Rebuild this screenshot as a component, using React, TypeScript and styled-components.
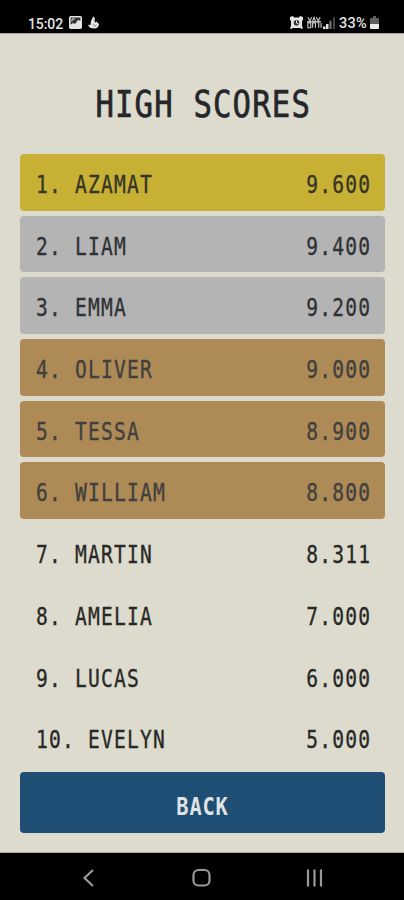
import React from "react";
import styled, { createGlobalStyle } from "styled-components";

const GlobalStyle = createGlobalStyle`
  * { box-sizing: border-box; }
  body { margin: 0; background: #000; }
`;

const mono = `"DejaVu Sans Mono", "Liberation Mono", monospace`;

const Phone = styled.div`
  width: 404px;
  height: 900px;
  display: flex;
  flex-direction: column;
  overflow: hidden;
  background: #000;
`;

const StatusBar = styled.header`
  height: 33px;
  flex: none;
  display: flex;
  justify-content: space-between;
  padding: 16px 25px 0 28px;
  color: #e4e4e4;
  font: 500 14px/16px Roboto, sans-serif;
`;

const StatusGroup = styled.div`
  display: flex;
  align-items: flex-start;
`;

const Clock = styled.span`
  width: 41px;
  letter-spacing: -0.1px;
`;

const Percent = styled.span`
  width: 31px;
  font-size: 14.5px;
  letter-spacing: 0.2px;
`;

const StatusIcon = styled.svg<{ $gap?: number }>`
  display: block;
  flex: none;
  margin-right: ${(p) => p.$gap ?? 0}px;
`;

const Screen = styled.main`
  height: 820px;
  flex: none;
  display: flex;
  flex-direction: column;
  padding: 0 19px 0 20px;
  background: #dddbce;
  border-top: 1px solid #aaa89e;
  border-bottom: 1px solid #aaa89e;
`;

const Title = styled.h1`
  height: 120px;
  margin: 0;
  padding-top: 49px;
  display: flex;
  justify-content: center;
  color: #25262a;
  font: 400 37px/44px ${mono};
  letter-spacing: 1.4px;
  -webkit-text-stroke: 0.7px;
  white-space: nowrap;
`;

const TitleText = styled.span`
  flex: none;
  transform: translateX(1px) scaleX(0.828);
`;

const Scores = styled.ol`
  list-style: none;
  margin: 0;
  padding: 0;
  height: 618px;
  flex: none;
  display: grid;
  grid-template-rows: repeat(10, 56.5px);
  row-gap: 5.2px;
`;

const tiers = {
  gold: { bg: "#c7b033", ink: "#343526" },
  silver: { bg: "#b4b4b4", ink: "#303134" },
  bronze: { bg: "#ae8a57", ink: "#40403d" },
  none: { bg: "transparent", ink: "#282927" },
};
type Tier = keyof typeof tiers;

const Row = styled.li<{ $tier: Tier }>`
  display: flex;
  justify-content: space-between;
  padding: 6px 14px 0 16px;
  border-radius: 4px;
  background: ${(p) => tiers[p.$tier].bg};
  color: ${(p) => tiers[p.$tier].ink};
  font: 400 24.5px/49px ${mono};
  letter-spacing: 1.5px;
  -webkit-text-stroke: 0.35px;
  white-space: pre;
`;

const Narrow = styled.span<{ $origin: string }>`
  transform: scaleX(0.8);
  transform-origin: ${(p) => p.$origin} center;
`;

const BackButton = styled.button`
  height: 61px;
  flex: none;
  border: 0;
  border-radius: 4px;
  padding: 9px 0 0;
  background: #1e4e73;
  color: #dfe3e4;
  font: 700 24.5px/50px ${mono};
  letter-spacing: 1px;
`;

const ButtonText = styled.span`
  display: inline-block;
  transform: scaleX(0.83);
`;

const NavBar = styled.nav`
  height: 47px;
  flex: none;
  display: grid;
  grid-template-columns: repeat(3, 113px);
  justify-content: center;
  align-items: center;
  justify-items: center;
  padding-top: 2px;
`;

const players: [string, string, Tier][] = [
  ["AZAMAT", "9.600", "gold"],
  ["LIAM", "9.400", "silver"],
  ["EMMA", "9.200", "silver"],
  ["OLIVER", "9.000", "bronze"],
  ["TESSA", "8.900", "bronze"],
  ["WILLIAM", "8.800", "bronze"],
  ["MARTIN", "8.311", "none"],
  ["AMELIA", "7.000", "none"],
  ["LUCAS", "6.000", "none"],
  ["EVELYN", "5.000", "none"],
];

export default function App() {
  return (
    <Phone>
      <GlobalStyle />
      <StatusBar>
        <StatusGroup>
          <Clock>15:02</Clock>
          <StatusIcon width="13" height="13" viewBox="0 0 13 13" $gap={6}>
            <rect x="0.8" y="0.8" width="11.4" height="11.4" rx="1" fill="#333" stroke="#e4e4e4" strokeWidth="1.6" />
            <path d="M1 12V9l3-2 2 1 3-4 3 1v7z" fill="#e4e4e4" />
            <path d="M3 5.500V3h3" stroke="#ddd" fill="none" />
          </StatusIcon>
          <StatusIcon width="12" height="13" viewBox="0 0 12 13">
            <path d="M5 0.500c3 1 1 4 2 6 1 0 1-1 2-1 0 2 2 1 2 3 0 2-2 4-5 4-3 0-5-1-6-3.500l3-.5C2 5 4 4 5 .5z" fill="#e4e4e4" />
            <path d="M5.500 8l1 2.500 2-1.500" stroke="#888" fill="none" />
          </StatusIcon>
        </StatusGroup>
        <StatusGroup>
          <StatusIcon width="13" height="13" viewBox="0 0 13 13" $gap={4}>
            <path d="M0 1l3-1 1 1.500h5L10 0l3 1v3l-1 1v5l1 2-1 1-2-1H3l-2 1-1-1 1-2V5L0 4z" fill="#e4e4e4" />
            <circle cx="6.500" cy="6.800" r="2.800" fill="#333" />
            <path d="M6.500 4.500V7l2 1" stroke="#eee" fill="none" />
          </StatusIcon>
          <StatusIcon width="15" height="13" viewBox="0 0 16 13" $gap={1}>
            <path d="M1 1l2 4 2-4M6 5l1.500-4L9 5M10 1l2 4 2-4M1 7h3v5H1zM6 12V7h3v5M11 7h1.500v5M15 7v5M0 5.500h15" stroke="#bbb" strokeWidth="1.3" fill="none" />
          </StatusIcon>
          <StatusIcon width="12" height="13" viewBox="0 0 12 13" $gap={4}>
            <path d="M0 10.500h2.500V13H0zM3 8h2.500v5H3z" fill="#ddd" />
            <path d="M6.500 4.500h2V13h-2z" fill="#777" />
            <path d="M10 1.500h2V13h-2z" fill="#444" />
          </StatusIcon>
          <Percent>33%</Percent>
          <StatusIcon width="9" height="13" viewBox="0 0 9 13">
            <path d="M3 0h3v2h2q1 0 1 1v6H0V3q0-1 1-1h2z" fill="#606060" />
            <path d="M0 8h9v4q0 1-1 1H1q-1 0-1-1z" fill="#eee" />
          </StatusIcon>
        </StatusGroup>
      </StatusBar>
      <Screen>
        <Title>
          <TitleText>HIGH SCORES</TitleText>
        </Title>
        <Scores>
          {players.map(([name, score, tier], i) => (
            <Row key={name} $tier={tier}>
              <Narrow $origin="left">{`${i + 1}. ${name}`}</Narrow>
              <Narrow $origin="right">{score}</Narrow>
            </Row>
          ))}
        </Scores>
        <BackButton>
          <ButtonText>BACK</ButtonText>
        </BackButton>
      </Screen>
      <NavBar>
        <svg width="20" height="20" viewBox="0 0 20 20" fill="none" stroke="#999" strokeWidth="2.200">
          <path d="M14 2L5.500 10 14 18" />
        </svg>
        <svg width="20" height="20" viewBox="0 0 20 20" fill="none" stroke="#999" strokeWidth="2.200">
          <rect x="1.500" y="2" width="16" height="15.500" rx="5" />
        </svg>
        <svg width="20" height="20" viewBox="0 0 20 20" fill="none" stroke="#999" strokeWidth="2.200">
          <path d="M3 1.500v17M9.500 1.500v17M16 1.500v17" />
        </svg>
      </NavBar>
    </Phone>
  );
}
